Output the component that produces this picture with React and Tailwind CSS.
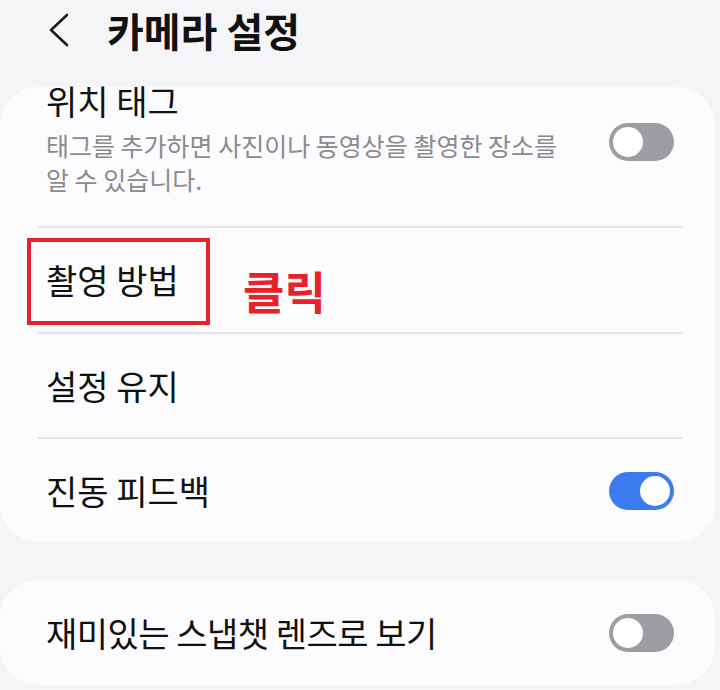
import React from 'react';

const font = { fontFamily: '"Noto Sans CJK KR", "Noto Sans", sans-serif' };

function Toggle({ on }) {
  return (
    <div
      className={`w-[65px] h-[38px] rounded-full p-[4px] flex shrink-0 ${
        on ? 'bg-[#3d7cf0] justify-end' : 'bg-[#9e9ea2] justify-start'
      }`}
    >
      <div className="w-[30px] h-[30px] rounded-full bg-white"></div>
    </div>
  );
}

function Divider() {
  return <div className="ml-[38px] mr-[32px] h-[2px] bg-[#e4e4e6]"></div>;
}

export default function App() {
  return (
    <div
      className="w-[720px] h-[690px] bg-[#f5f5f7] overflow-hidden text-[#111]"
      style={font}
    >
      {/* Header */}
      <div className="h-[87px] flex items-start pt-[10px]">
        <svg className="ml-[47px] mt-[2px]" width="26" height="36" viewBox="0 0 26 36" fill="none">
          <polyline points="20,3 4,18 20,33" stroke="#1a1a1a" strokeWidth="2.6" strokeLinecap="round" strokeLinejoin="round" />
        </svg>
        <h1 className="ml-[34px] text-[40px] leading-[40px] font-bold">카메라 설정</h1>
      </div>

      {/* Card 1 */}
      <div className="w-[715px] h-[455px] bg-[#fcfcfe] rounded-[38px] relative">
        <div className="flex items-center pl-[46px] pr-[41px] pb-[30px]">
          <div className="flex-1">
            <div className="text-[34px] leading-[28px]">위치 태그</div>
            <div className="mt-[13px] text-[25px] leading-[34px] text-[#8b8b8d]">
              태그를 추가하면 사진이나 동영상을 촬영한 장소를
              <br />
              알 수 있습니다.
            </div>
          </div>
          <Toggle on={false} />
        </div>
        <Divider />
        <div className="h-[104px] flex items-center pl-[46px] relative">
          <span className="text-[34px] leading-[36px]">촬영 방법</span>
          <div className="absolute left-[27px] top-[10px] w-[183px] h-[87px] border-[4px] border-[#e3242b]"></div>
          <span className="absolute left-[243px] top-[40px] text-[45px] leading-[45px] font-bold text-[#e8222a]">클릭</span>
        </div>
        <Divider />
        <div className="h-[103px] flex items-center pl-[46px] pr-[41px]">
          <span className="text-[34px] leading-[36px]">설정 유지</span>
        </div>
        <Divider />
        <div className="h-[104px] flex items-center justify-between pl-[46px] pr-[41px]">
          <span className="text-[34px] leading-[36px]">진동 피드백</span>
          <Toggle on={true} />
        </div>
      </div>

      {/* Card 2 */}
      <div className="mt-[38px] w-[715px] h-[105px] bg-[#fcfcfe] rounded-[38px] flex items-center justify-between pl-[46px] pr-[41px]">
        <span className="text-[34px] leading-[36px] tracking-[-0.5px]">재미있는 스냅챗 렌즈로 보기</span>
        <Toggle on={false} />
      </div>
    </div>
  );
}
